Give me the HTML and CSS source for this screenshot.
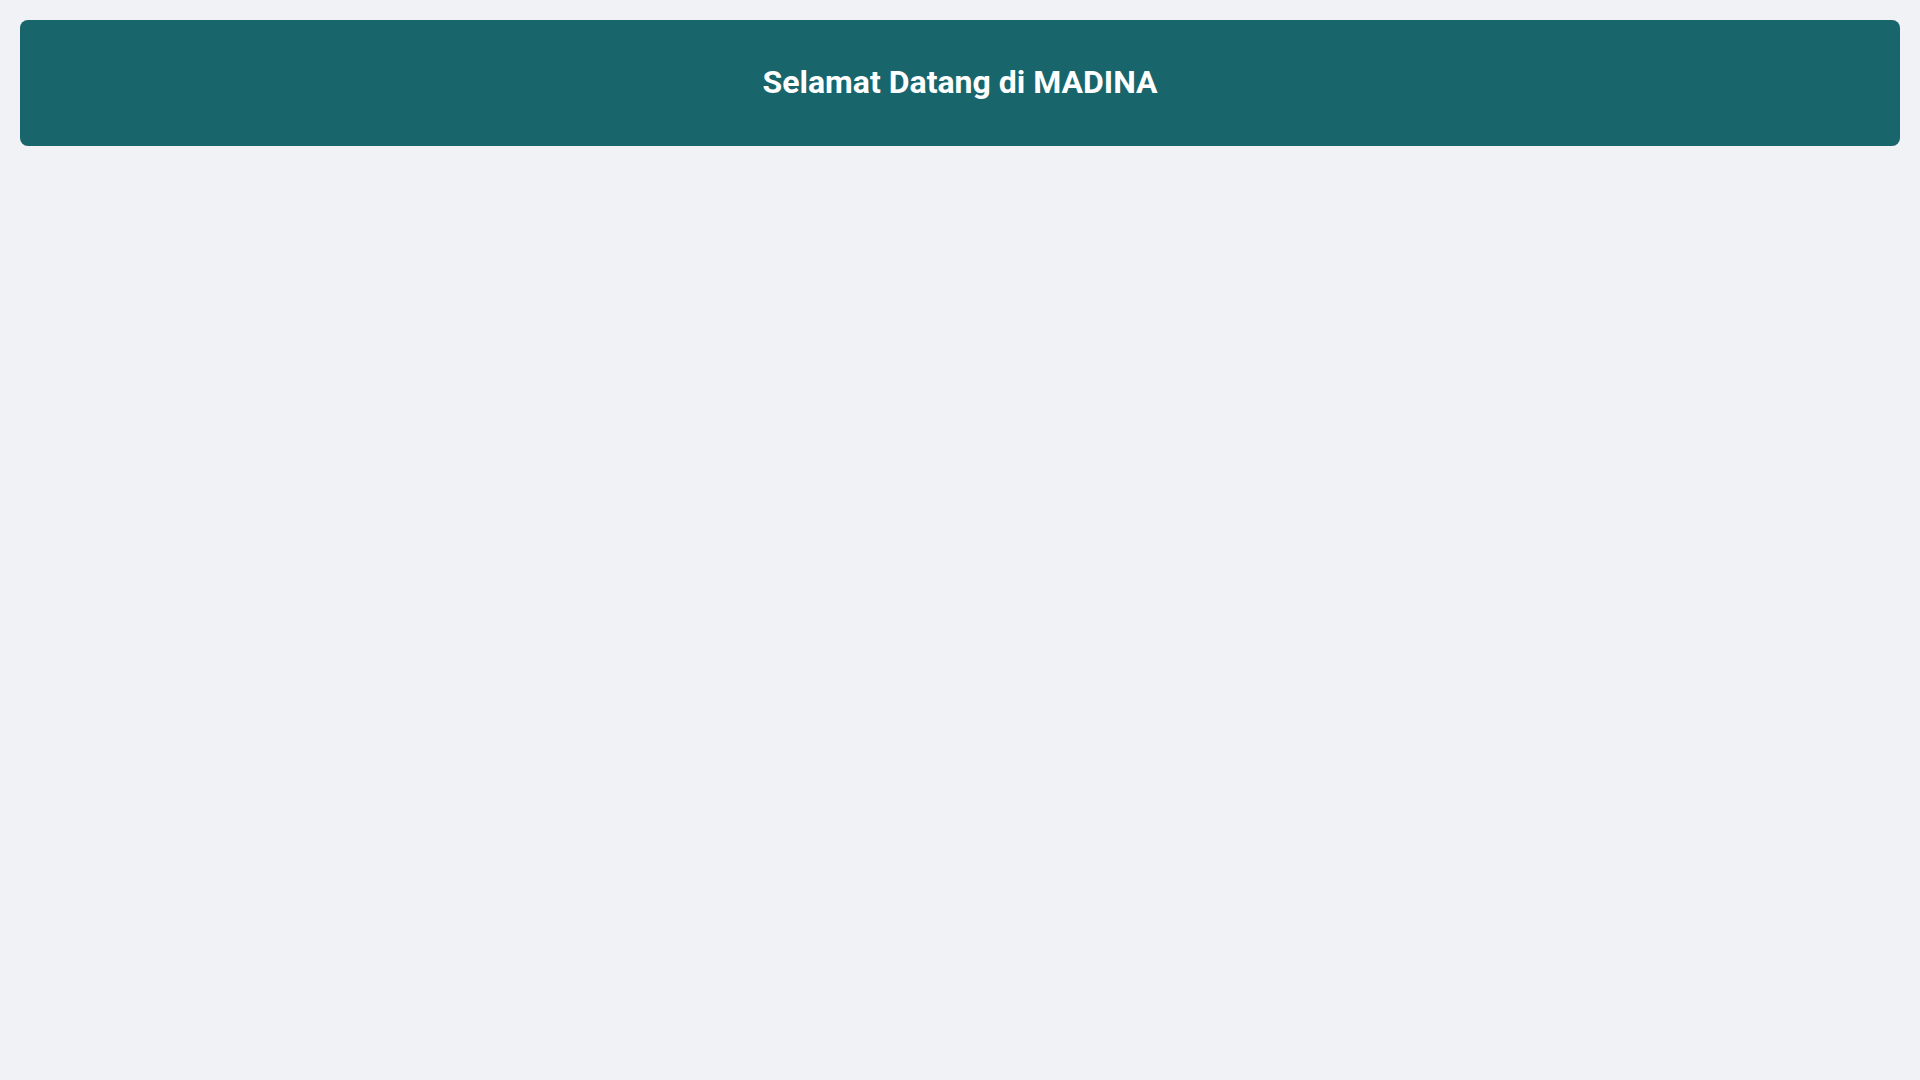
FILE: index.html
```html
<!DOCTYPE html>
<html lang="id">
<head>
<meta charset="utf-8">
<title>MADINA</title>
<link rel="stylesheet" href="styles.css">
</head>
<body>
<main class="page">
  <header class="banner">
    <h1 class="banner-title">Selamat Datang di MADINA</h1>
  </header>
</main>
</body>
</html>
```
FILE: styles.css
```css
html, body {
  margin: 0;
  padding: 0;
  height: 100%;
}
body {
  background: #f0f2f5;
  font-family: Roboto, "Liberation Sans", sans-serif;
}
.page {
  padding: 20px;
}
.banner {
  background: #18656b;
  border-radius: 8px;
  padding: 43px 20px 45px;
  text-align: center;
}
.banner-title {
  margin: 0;
  color: #ffffff;
  font-size: 32px;
  line-height: 38px;
  font-weight: 700;
}
```
